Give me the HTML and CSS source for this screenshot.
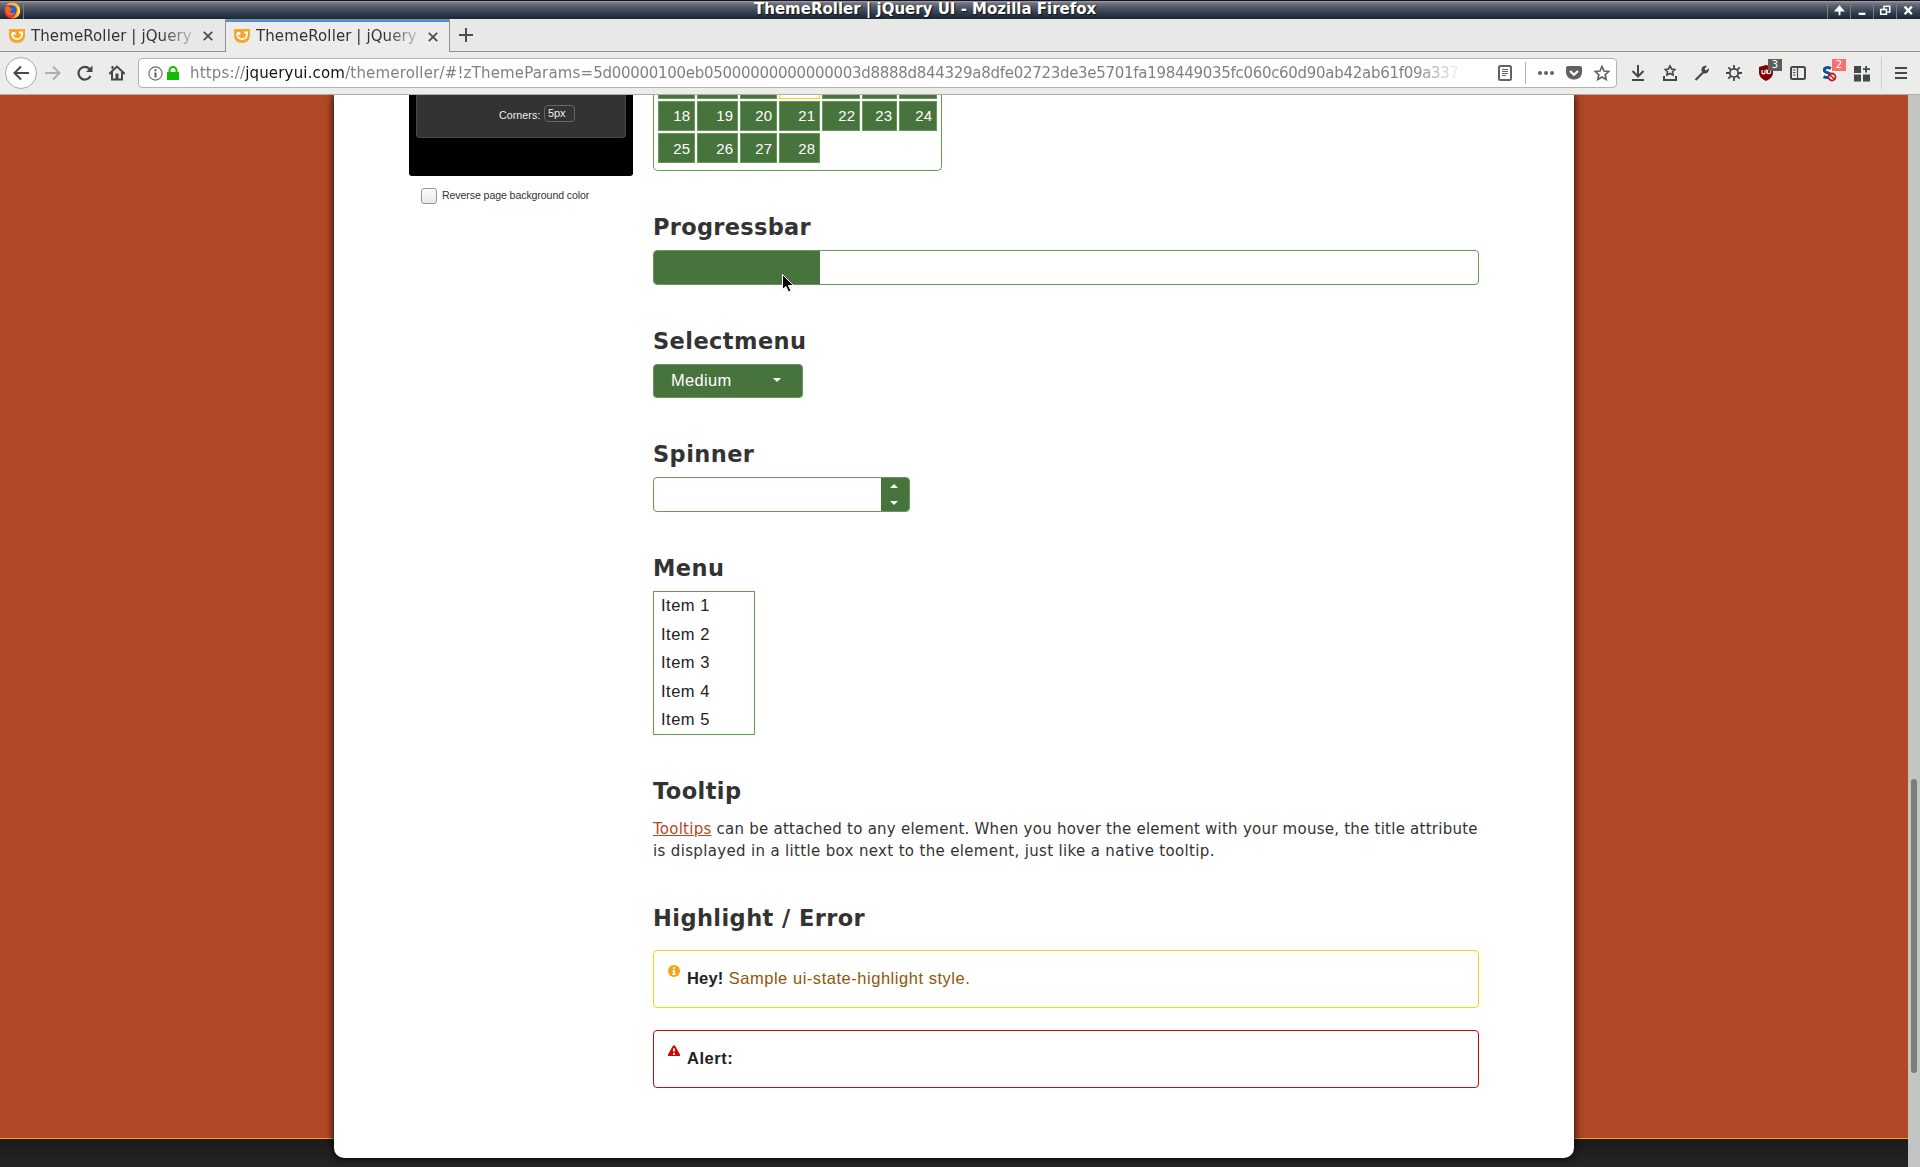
FILE: index.html
```html
<!DOCTYPE html>
<html lang="en">
<head>
<meta charset="utf-8">
<title>ThemeRoller | jQuery UI</title>
<link rel="stylesheet" href="styles.css">
</head>
<body>
<header class="titlebar">
  <div class="app-icon"><svg width="17" height="17" viewBox="0 0 17 17"><circle cx="8.5" cy="8.8" r="8" fill="#e8352b"/><path d="M2 3C5 0 12-1 15 4c3 6-1 12-7 12.500C12 14 13 11 12 8c0-3-3-5-6-5z" fill="#ffb52b"/><path d="M13 3c4 3 4 9 0 12 1-4 1-8 0-12z" fill="#ffe23a"/><circle cx="8.300" cy="8" r="4.600" fill="#1c63d6"/><path d="M1 5c2-1 4-1 5 1l3 1-3 2c0 2 3 3 5 1-1 4-7 5-9 0z" fill="#f26422"/></svg></div>
  <span class="window-title">ThemeRoller | jQuery UI - Mozilla Firefox</span>
  <div class="window-buttons">
    <svg viewBox="0 0 23 17"><path d="M12 14V6M8.500 9l3.500-4 3.500 4z" fill="#fff" stroke="#fff" stroke-width="2"/></svg>
    <svg viewBox="0 0 23 17"><path d="M8 12.500h7" stroke="#fff" stroke-width="2.400"/></svg>
    <svg viewBox="0 0 23 17"><path d="M10.500 8V4.500h6v6H14" fill="none" stroke="#fff" stroke-width="1.600"/><path d="M7 8h6v5H7z" fill="none" stroke="#fff" stroke-width="1.600"/></svg>
    <svg viewBox="0 0 23 17"><path d="M8 5l7.500 8M15.500 5L8 13" stroke="#fff" stroke-width="2.400"/></svg>
  </div>
</header>
<div class="tabs">
  <div class="tab"><svg class="favicon" viewBox="0 0 16 16"><path d="M0 1h16v6c0 5-3 8-8 8S0 12 0 7z" fill="#faa523"/><path d="M3 5c0 8 10 8 10 1M3 5h2.500v2M10 4.500h3v3" fill="none" stroke="#fff" stroke-width="1.800"/></svg><span class="tab-label">ThemeRoller | jQuery</span><svg class="close" viewBox="0 0 10 10"><path d="M.8.800l8.400 8.400M9.200.8L.8 9.200" stroke="#4a4e50" stroke-width="1.800"/></svg></div>
  <div class="tab tab-active"><svg class="favicon" viewBox="0 0 16 16"><path d="M0 1h16v6c0 5-3 8-8 8S0 12 0 7z" fill="#faa523"/><path d="M3 5c0 8 10 8 10 1M3 5h2.500v2M10 4.500h3v3" fill="none" stroke="#fff" stroke-width="1.800"/></svg><span class="tab-label">ThemeRoller | jQuery</span><svg class="close" viewBox="0 0 10 10"><path d="M.8.800l8.400 8.400M9.200.8L.8 9.200" stroke="#4a4e50" stroke-width="1.800"/></svg></div>
  <div class="tab-rest"><svg width="14" height="14" viewBox="0 0 14 14"><path d="M7 0v14M0 7h14" stroke="#4a4e50" stroke-width="2"/></svg></div>
</div>
<nav class="toolbar">
  <div class="back"><svg width="16" height="16" viewBox="0 0 16 16"><path d="M16 8H2M8 1.500L1.500 8 8 14.500" fill="none" stroke="#43484a" stroke-width="2"/></svg></div>
  <svg class="forward" viewBox="0 0 16 16"><path d="M0 8h14M8 1.500L14.500 8 8 14.500" fill="none" stroke="#afafae" stroke-width="2"/></svg>
  <svg class="reload" viewBox="0 0 16 16"><path d="M13.500 11A6.300 6.300 0 1 1 12.500 4" fill="none" stroke="#43484a" stroke-width="2.200"/><path d="M15.500.5V7H9z" fill="#43484a"/></svg>
  <svg class="home" viewBox="0 0 16 16"><path d="M0 9l8-7.500L16 9M3 7v7.500h10V7" fill="none" stroke="#43484a" stroke-width="2"/><path d="M2.500 1h2v3h-2zM6.500 8.500h3V14h-3z" fill="#43484a"/></svg>
  <div class="urlbar">
    <svg class="info" viewBox="0 0 15 15"><circle cx="7.500" cy="7.500" r="6.600" fill="none" stroke="#6f6f6f" stroke-width="1.200"/><path d="M7.500 3.300v1.900M7.500 6.500v5" stroke="#555" stroke-width="1.900"/></svg>
    <svg class="lock" viewBox="0 0 12 14"><path d="M0 6h12v8H0z" fill="#12bc00"/><path d="M2.500 7V4.500a3.500 3.500 0 0 1 7 0V7" fill="none" stroke="#12bc00" stroke-width="2"/></svg>
    <span class="url">https://<b>jqueryui.com</b>/themeroller/#!zThemeParams=<span class="params">5d00000100eb05000000000000003d8888d844329a8dfe02723de3e5701fa198449035fc060c60d90ab42ab61f09a337</span></span>
    <svg class="reader" viewBox="0 0 14 16"><rect x="1" y="1" width="12" height="14" rx="1.500" fill="none" stroke="#626262" stroke-width="2"/><path d="M4 4.500h6M4 6.500h6M4 8.500h6M4 10.500h4" stroke="#626262"/></svg>
    <i class="url-sep"></i>
    <svg class="dots" viewBox="0 0 16 16"><circle cx="2" cy="8" r="2" fill="#626262"/><circle cx="8" cy="8" r="2" fill="#626262"/><circle cx="14" cy="8" r="2" fill="#626262"/></svg>
    <svg class="pocket" viewBox="0 0 16 16"><path d="M2 1h12q2 0 2 2v4c0 10-16 10-16 0V3q0-2 2-2z" fill="#626262"/><path d="M4 6l4 3.800L12 6" fill="none" stroke="#fff" stroke-width="2.200"/></svg>
    <svg class="star" viewBox="0 0 16 16"><path d="M8 1.500l2 4.500 4.800.5-3.600 3.200 1 4.800L8 12.100l-4.200 2.400 1-4.800L1.200 6.500 6 6z" fill="none" stroke="#626262" stroke-width="1.700"/></svg>
  </div>
  <div class="tools">
    <svg viewBox="0 0 16 16"><path d="M8 0v11M2.500 6L8 11.500 13.500 6M2 15h12" fill="none" stroke="#43484a" stroke-width="2"/></svg>
    <svg viewBox="0 0 16 16"><path d="M8 1l1.600 3 3.200.5-2.300 2.200.6 3.300L8 8.500 4.900 10l.6-3.300-2.300-2.200L6.400 4z" fill="none" stroke="#43484a" stroke-width="1.600"/><path d="M2 11v4h12v-4" fill="none" stroke="#43484a" stroke-width="2"/></svg>
    <svg viewBox="0 0 16 16"><path d="M1.500 15L9 7.500" stroke="#43484a" stroke-width="2.200"/><path d="M13 1L10.500 4l1.500 1.500L15 3c0 4-2 6-5.500 5.500L7.500 6C7 3 9 0 13 1z" fill="#43484a"/></svg>
    <svg viewBox="0 0 16 16"><circle cx="8" cy="8" r="4.200" fill="none" stroke="#43484a" stroke-width="1.800"/><path d="M8 0v3.500M8 12.500V16M0 8h3.500M12.500 8H16M2.300 2.300l2.500 2.500M11.200 11.200l2.500 2.500M2.300 13.700l2.500-2.500M11.200 4.800l2.500-2.500" stroke="#43484a" stroke-width="1.800"/></svg>
    <div class="ext"><svg viewBox="0 0 16 16"><path d="M8 0l7 2v5c0 5-3 7-7 9-4-2-7-4-7-9V2z" fill="#800000"/><path d="M4 5v3q1.500 1.500 3 0V5M8 5h1v4" fill="none" stroke="#fff" stroke-width="1.200"/><circle cx="11" cy="7" r="1.700" fill="none" stroke="#fff" stroke-width="1.100"/></svg><span class="badge">3</span></div>
    <svg viewBox="0 0 16 16"><rect x="1" y="2" width="14" height="12" rx="1.500" fill="none" stroke="#43484a" stroke-width="2"/><path d="M7.500 2v12M3 5h2.500M3 7.500h2.500M3 10h2.500" stroke="#43484a" stroke-width="1.200"/></svg>
    <div class="ext"><svg viewBox="0 0 16 16"><circle cx="6" cy="8" r="7" fill="#fff"/><path d="M9 3.500C5 1.500 1.500 3 2.500 6c1 2 6 1.500 6 4.500 0 2.500-4.500 2.500-7 1" fill="none" stroke="#1551a0" stroke-width="3"/><circle cx="10" cy="12" r="3.500" fill="#fff" stroke="#c01818" stroke-width="1.800"/><path d="M7.800 9.800l4.500 4.500" stroke="#c01818" stroke-width="1.600"/></svg><span class="badge badge-red">2</span></div>
    <svg viewBox="0 0 16 16"><path d="M0 1h7v7H0zM0 9.500h7v7H0zM9 9.500h7v7H9zM11.200 1h1.800v2.200H16V5h-3v2.500h-1.800V5H9V3.200h2.200z" fill="#43484a"/></svg>
  </div>
  <i class="tool-sep"></i>
  <svg class="menu-icon" viewBox="0 0 12 12"><path d="M0 1h12M0 6h12M0 11h12" stroke="#43484a" stroke-width="2"/></svg>
</nav>
<div class="viewport">
  <div class="page">
    <main class="card">
      <aside class="sidebar">
        <div class="roller"><div class="roller-group"><label>Corners:</label><span class="corner-input">5px</span></div></div>
        <div class="reverse"><span class="checkbox"></span><span>Reverse page background color</span></div>
      </aside>
      <section class="demos">
        <div class="datepicker">
          <div class="days">
            <i></i><i></i><i></i><i class="today"></i><i></i><i></i><i></i>
            <a>18</a><a>19</a><a>20</a><a>21</a><a>22</a><a>23</a><a>24</a>
            <a class="last">25</a><a class="last">26</a><a class="last">27</a><a class="last">28</a>
          </div>
        </div>
        <h2 class="h-progress">Progressbar</h2>
        <div class="progressbar"><div class="progress-value"></div></div>
        <h2>Selectmenu</h2>
        <div class="selectmenu"><span>Medium</span><svg width="8" height="4" viewBox="0 0 8 4"><path d="M0 0h8L4 4z" fill="#fff"/></svg></div>
        <h2>Spinner</h2>
        <div class="spinner"><div class="spinner-buttons"><svg width="8" height="4" viewBox="0 0 8 4"><path d="M0 4h8L4 0z" fill="#fff"/></svg><svg width="8" height="4" viewBox="0 0 8 4"><path d="M0 0h8L4 4z" fill="#fff"/></svg></div></div>
        <h2>Menu</h2>
        <ul class="menu"><li>Item 1</li><li>Item 2</li><li>Item 3</li><li>Item 4</li><li>Item 5</li></ul>
        <h2>Tooltip</h2>
        <p class="tooltip-text"><a href="#">Tooltips</a> can be attached to any element. When you hover the element with your mouse, the title attribute<br><span class="second-line">is displayed in a little box next to the element, just like a native tooltip.</span></p>
        <h2 class="h-highlight">Highlight / Error</h2>
        <div class="notice notice-highlight"><svg viewBox="0 0 12 12"><circle cx="6" cy="6" r="6" fill="#f8a410"/><path d="M5 2h2v2H5zM4.500 5H7v3.500h.7V10H4.300V8.500H5V6h-.5z" fill="#fff"/></svg><p><strong>Hey!</strong> Sample ui-state-highlight style.</p></div>
        <div class="notice notice-error"><svg viewBox="0 0 12 12"><path d="M5 .5h2L12 9.500V11H0V9.500z" fill="#cd0a0a"/><path d="M5 3.500h2v3H5zM5 8h2v1.700H5z" fill="#fff"/></svg><p><strong>Alert:</strong></p></div>
      </section>
    </main>
    <footer class="footer"></footer>
  </div>
  <div class="scrollbar"><div class="thumb"></div></div>
</div>
<svg class="cursor" viewBox="0 0 12 19"><path d="M.5.500v15l3.500-3 2.500 5.500 2.500-1-2.500-5.500h5z" fill="#000" stroke="#fff"/></svg>
</body>
</html>
```
FILE: styles.css
```css
* { box-sizing: border-box; }
body { margin: 0; width: 1920px; height: 1167px; overflow: hidden; display: flex; flex-direction: column; font-family: "DejaVu Sans", sans-serif; color: #333; }
svg { display: block; flex: none; }

.titlebar { height: 19px; flex: none; display: flex; border-top: 1px solid #15161d; background: linear-gradient(#a3a3b0 0, #74747f 2px, #535a68 6px, #2f3d4c 12px, #1b2837); }
.app-icon { width: 24px; padding: 1px 0 0 4px; border-right: 1px solid #777e88; }
.window-title { flex: 1; padding-left: 730px; font: bold 15px/17px "DejaVu Sans", sans-serif; color: #fff; text-shadow: 1px 1px 1px #111; white-space: pre; }
.window-buttons { display: flex; padding-right: 1px; }
.window-buttons svg { width: 23px; height: 18px; border-left: 1px solid #777e88; }

.tabs { height: 33px; flex: none; display: flex; background: #e8e8e6; }
.tab { width: 226px; display: flex; align-items: center; padding: 1px 12px 0 9px; border-bottom: 1px solid #919190; border-right: 1px solid #919190; }
.tab-active { width: 224px; border-bottom: 0; background: #ececea; border-top: 1px solid #919190; box-shadow: inset 0 2px #4a90d9; padding: 0 11px 0 8px; }
.favicon { width: 16px; height: 16px; }
.tab-label { width: 162px; margin-left: 6px; margin-right: 10px; white-space: nowrap; font-size: 15px; line-height: 24px; letter-spacing: .1px; -webkit-mask-image: linear-gradient(90deg, #000 130px, transparent 170px); mask-image: linear-gradient(90deg, #000 130px, transparent 170px); }
.close { width: 10px; height: 10px; margin-top: 1px; }
.tab-rest { flex: 1; display: flex; align-items: center; padding-left: 9px; border-bottom: 1px solid #919190; }

.toolbar { height: 43px; flex: none; display: flex; align-items: center; background: #ececea; border-bottom: 1px solid #adadab; }
.back { width: 32px; height: 32px; margin-left: 5px; border: 1px solid #a9a9a8; border-radius: 50%; background: #fdfdfd; display: flex; align-items: center; justify-content: center; }
.forward, .reload, .home { width: 16px; height: 16px; }
.forward { margin-left: 8px; }
.reload { margin-left: 16px; }
.home { margin-left: 16px; }
.urlbar { width: 1479px; height: 30px; margin-left: 13px; border: 1px solid #b2b2b0; border-radius: 4px; background: #fff; display: flex; align-items: center; padding-left: 9px; }
.info { width: 15px; height: 15px; }
.lock { width: 12px; height: 14px; margin-left: 4px; }
.url { width: 1270px; margin-left: 11px; white-space: nowrap; font-size: 15px; line-height: 24px; letter-spacing: .17px; color: #808080; -webkit-mask-image: linear-gradient(90deg, #000 1225px, transparent 1273px); mask-image: linear-gradient(90deg, #000 1225px, transparent 1273px); }
.url b { font-weight: normal; color: #111; }
.params { letter-spacing: -.29px; }
.reader { width: 14px; height: 16px; margin-left: 38px; }
.url-sep { width: 1px; height: 22px; margin-left: 13px; background: #b2b2b2; }
.dots { width: 16px; height: 16px; margin-left: 12px; }
.pocket { width: 16px; height: 16px; margin-left: 12px; }
.star { width: 16px; height: 16px; margin-left: 12px; }
.tools { display: flex; gap: 16px; margin-left: 13px; }
.tools svg { width: 16px; height: 16px; overflow: visible; }
.ext { position: relative; width: 16px; }
.badge { position: absolute; left: 10px; top: -6px; width: 14px; height: 12px; background: #5e5e5e; color: #fff; font-size: 10px; line-height: 12px; text-align: center; }
.badge-red { background: #f97070; }
.tool-sep { width: 1px; height: 32px; margin-left: 11px; background: #ccc; }
.menu-icon { width: 12px; height: 12px; margin-left: 13px; }

.viewport { flex: 1; display: flex; min-height: 0; }
.page { width: 1908px; height: 1072px; background: #b24926; display: flex; flex-direction: column; align-items: center; overflow: hidden; }
.card { position: relative; z-index: 1; width: 1240px; height: 1063px; flex: none; padding-left: 75px; background: #fff; border-radius: 0 0 10px 10px; box-shadow: 0 0 8px #000; display: flex; }
.footer { width: 100%; height: 29px; margin-top: -20px; flex: none; border-top: 1px solid #f9a11b; background: linear-gradient(#1b1b1b, #252525); }
.scrollbar { width: 12px; background: #c3c4c4; padding: 684px 3px 0; }
.thumb { height: 294px; width: 6px; border-radius: 3px; background: #7b7d7d; }

.sidebar { width: 244px; flex: none; font: 10.6px/14px "Liberation Sans", sans-serif; letter-spacing: -.1px; }
.roller { width: 224px; height: 81px; background: #000; border-radius: 0 0 3px 3px; padding: 0 7px; }
.roller-group { width: 210px; height: 43px; border: 1px solid #494949; border-top: 0; border-radius: 0 0 4px 4px; background: #333; color: #eee; display: flex; padding: 10px 0 0 82px; }
.roller-group label { width: 45px; padding-top: 3px; letter-spacing: .1px; }
.corner-input { width: 31px; height: 17px; border: 1px solid #666; border-radius: 4px; padding-left: 3px; line-height: 15px; font-size: 11px; }
.reverse { display: flex; padding: 12px 0 0 12px; gap: 5px; white-space: nowrap; }
.checkbox { width: 16px; height: 16px; border: 1px solid #969690; border-radius: 3px; background: linear-gradient(#fcfcfc, #e8e8e8); }

.demos { width: 826px; }
h2 { margin: 0; font-size: 22.5px; line-height: 26px; letter-spacing: .42px; color: #333; }
.datepicker { width: 289px; height: 76px; border: 1px solid #649956; border-top: 0; border-radius: 0 0 5px 5px; padding-left: 4px; }
.days { display: grid; grid-template-columns: 37px 41px 37px 41px 38px 35px 38px; grid-template-rows: 4px 30px 30px; gap: 2px; font: 15px/28px "Liberation Sans", sans-serif; }
.days i, .days a { border: 1px solid #649956; background: #47733c; color: #fff; text-align: right; padding-right: 4px; }
.days i { border-top: 0; }
.days .last { line-height: 30px; }
.days .today { background: #fff; border-color: #fcd113; }
.h-progress { margin-top: 43px; letter-spacing: .3px; }
.progressbar { height: 35px; margin-top: 10px; border: 1px solid #649956; border-radius: 4px; overflow: hidden; }
.progress-value { width: 166px; height: 100%; background: #47733c; }
.progressbar + h2, .selectmenu + h2, .spinner + h2 { margin-top: 43px; }
.selectmenu { width: 150px; height: 34px; margin-top: 10px; border: 1px solid #649956; border-radius: 4px; background: #47733c; color: #fff; font: 16.5px/30px "Liberation Sans", sans-serif; letter-spacing: .3px; padding: 0 21px 0 17px; display: flex; justify-content: space-between; }
.selectmenu svg { margin-top: 13px; }
.spinner { width: 257px; height: 35px; margin-top: 10px; border: 1px solid #649956; border-radius: 4px; overflow: hidden; display: flex; justify-content: flex-end; }
.spinner-buttons { width: 28px; background: #47733c; display: flex; flex-direction: column; justify-content: space-between; padding: 6px 0 6px 9px; }
.menu { list-style: none; margin: 10px 0 0; padding: 0; width: 102px; height: 144px; border: 1px solid #649956; font: 16.5px/28.5px "Liberation Sans", sans-serif; letter-spacing: .5px; color: #222; }
.menu li { padding-left: 7px; position: relative; top: -1px; }
.menu + h2 { margin-top: 43px; }
.tooltip-text { margin: 14px 0 0; font-size: 15px; line-height: 22px; letter-spacing: .245px; white-space: nowrap; }
.tooltip-text a { color: #b24926; }
.second-line { letter-spacing: .34px; }
.h-highlight { margin-top: 43px; }
.notice { height: 58px; border: 1px solid #fcd113; border-radius: 4px; display: flex; padding-left: 14px; font: 16.5px/24px "Liberation Sans", sans-serif; letter-spacing: .53px; color: #915608; }
.notice svg { width: 12px; height: 12px; margin-top: 14px; }
.notice p { margin: 15px 0 0 7px; }
.notice strong { color: #222; }
.notice-highlight strong { letter-spacing: .2px; }
.notice-highlight { margin-top: 19px; }
.notice-error { margin-top: 22px; border-color: #cd0a0a; }

.cursor { position: absolute; z-index: 2; left: 782px; top: 274px; width: 12px; height: 19px; }
```
